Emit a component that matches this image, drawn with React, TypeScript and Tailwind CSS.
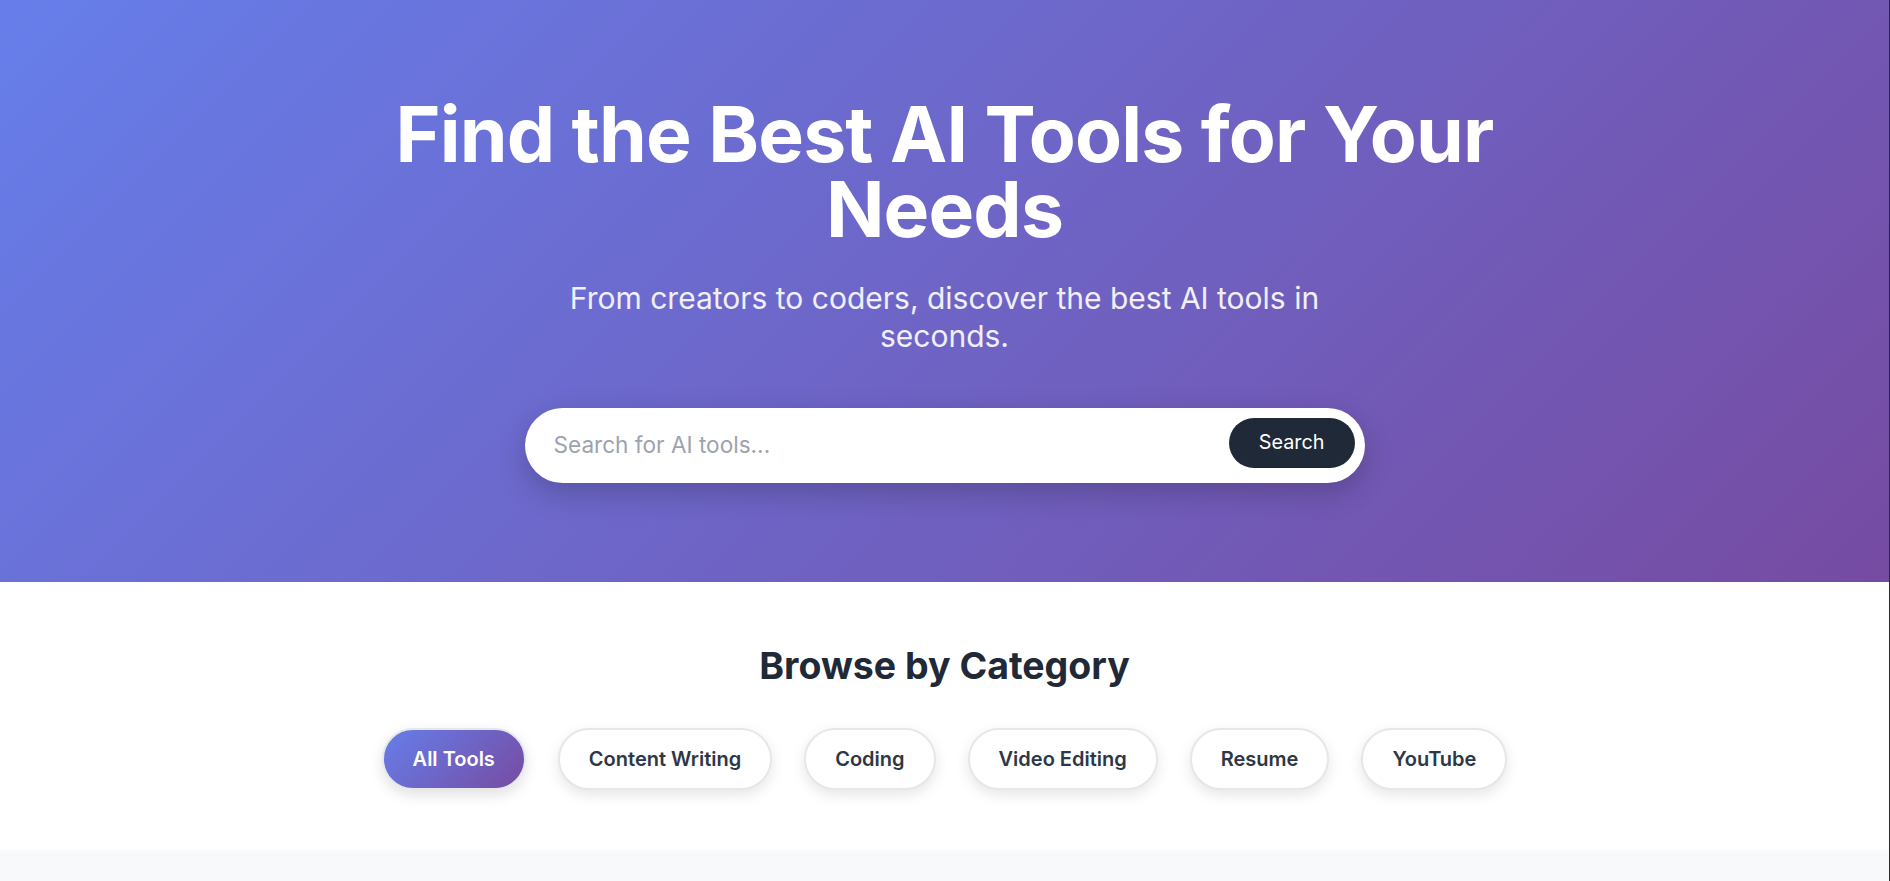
import React from 'react';

const categories = ['All Tools', 'Content Writing', 'Coding', 'Video Editing', 'Resume', 'YouTube'];

const CategoryPill: React.FC<{ label: string; active?: boolean }> = ({ label, active }) => (
  <button
    className={
      active
        ? 'h-[62px] px-[29px] rounded-full border-2 border-[#e5e7eb] bg-[linear-gradient(135deg,#667eea_0%,#764ba2_100%)] text-white text-[20px] font-semibold shadow-[0_5px_14px_rgba(0,0,0,0.12)]'
        : 'h-[62px] px-[29px] rounded-full border-2 border-[#e5e7eb] bg-white text-[#2d3748] text-[20px] font-semibold shadow-[0_5px_14px_rgba(0,0,0,0.10)]'
    }
  >
    {label}
  </button>
);

export default function App() {
  return (
    <div className="min-h-[881px] bg-[#f8f9fa] border-r border-[#2b2b2b] font-['Inter',sans-serif]">
      {/* hero */}
      <section className="h-[582px] bg-[linear-gradient(135deg,#667eea_0%,#764ba2_100%)] pt-[97px] flex flex-col items-center text-center text-white">
        <h1 className="max-w-[1200px] text-[76.8px] leading-[75px] font-bold tracking-[-0.85px]">
          Find the Best AI Tools for Your Needs
        </h1>
        <p className="mt-[32px] max-w-[800px] text-[30px] leading-[38.4px] text-white/90">
          From creators to coders, discover the best AI tools in seconds.
        </p>
        <div className="mt-[52px] w-[840px] h-[75px] bg-white rounded-full flex items-start pt-[10px] pl-[29px] pr-[10px] shadow-[0_10px_30px_rgba(0,0,0,0.2)]">
          <input
            className="flex-1 h-[53px] outline-none bg-transparent text-[22.6px] text-[#1f2937] placeholder:text-[#9ca3af]"
            placeholder="Search for AI tools..."
          />
          <button className="h-[50px] px-[30px] rounded-full bg-[#1f2937] text-white text-[19.8px]">Search</button>
        </div>
      </section>

      {/* categories */}
      <section className="h-[268px] bg-white pt-[61px] flex flex-col items-center">
        <h2 className="text-[37.5px] leading-[45px] font-bold text-[#1f2937]">Browse by Category</h2>
        <div className="mt-[40px] flex gap-[32px]">
          {categories.map((c, i) => (
            <CategoryPill key={c} label={c} active={i === 0} />
          ))}
        </div>
      </section>
    </div>
  );
}
